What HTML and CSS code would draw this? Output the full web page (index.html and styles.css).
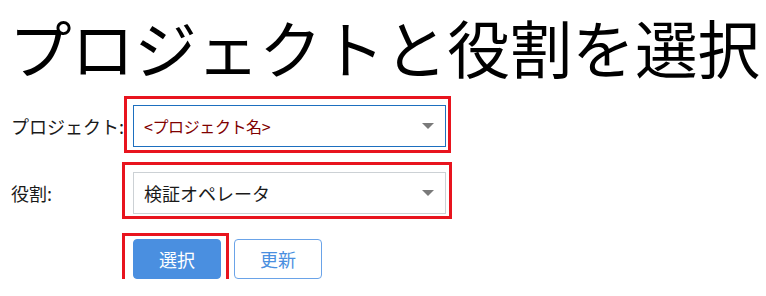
FILE: index.html
```html
<!DOCTYPE html>
<html lang="ja">
<head>
<meta charset="utf-8">
<title>プロジェクトと役割を選択</title>
<link rel="stylesheet" href="styles.css">
</head>
<body>
<div class="page">
  <h1 class="title">プロジェクトと役割を選択</h1>
  <div class="form">
    <label class="label">プロジェクト:</label>
    <div class="field mark mark-project">
      <div class="select select-focus">
        <span class="value value-placeholder">&lt;プロジェクト名&gt;</span>
        <span class="arrow"></span>
      </div>
    </div>
    <label class="label">役割:</label>
    <div class="field mark mark-role">
      <div class="select">
        <span class="value">検証オペレータ</span>
        <span class="arrow"></span>
      </div>
    </div>
    <div class="spacer"></div>
    <div class="buttons">
      <div class="mark mark-button">
        <button class="btn btn-primary">選択</button>
      </div>
      <button class="btn btn-outline">更新</button>
    </div>
  </div>
</div>
</body>
</html>
```

FILE: styles.css
```css
html, body {
  margin: 0;
  padding: 0;
  background: #ffffff;
}

body {
  font-family: "Noto Sans CJK JP", "Noto Sans", sans-serif;
  color: #1a1a1a;
}

.page {
  padding: 0 0 0 12px;
}

.title {
  margin: 0 0 0 -3px;
  height: 96px;
  font-size: 62.6px;
  line-height: 92px;
  font-weight: 400;
  color: #000;
  white-space: nowrap;
}

.form {
  display: grid;
  grid-template-columns: 121px 313px;
  row-gap: 25px;
  padding-top: 9px;
  align-items: center;
}

.label {
  font-size: 18px;
  color: #1a1a1a;
  margin-left: -1px;
}

.field {
  position: relative;
}

.select {
  height: 42px;
  box-sizing: border-box;
  border: 1px solid #ccd1d5;
  background: #fff;
  display: flex;
  align-items: center;
  justify-content: space-between;
  padding: 0 11px 0 10px;
}

.select-focus {
  border-color: #1d6fbf;
}

.value {
  font-size: 18px;
  color: #1a1a1a;
}

.value-placeholder {
  font-size: 16px;
  letter-spacing: -0.4px;
  color: #7f0000;
}

.arrow {
  width: 0;
  height: 0;
  border-left: 6px solid transparent;
  border-right: 6px solid transparent;
  border-top: 6px solid #7a7a7a;
}

.mark {
  position: relative;
}

.mark::after {
  content: "";
  position: absolute;
  border: 3px solid #e8141e;
  pointer-events: none;
}

.mark-project::after {
  top: -9px;
  left: -9px;
  right: -5px;
  bottom: -6px;
}

.mark-role::after {
  top: -10px;
  left: -11px;
  right: -6px;
  bottom: -5px;
}

.mark-button::after {
  top: -6px;
  left: -11px;
  right: -8px;
  bottom: -3px;
}

.buttons {
  display: flex;
  gap: 13px;
}

.btn {
  width: 88px;
  height: 40px;
  box-sizing: border-box;
  border-radius: 4px;
  font-family: "Noto Sans CJK JP", "Noto Sans", sans-serif;
  font-size: 18px;
  cursor: pointer;
  display: block;
  padding: 0;
}

.btn-primary {
  background: #4a8fe0;
  border: 1px solid #4a8fe0;
  color: #ffffff;
}

.btn-outline {
  background: #ffffff;
  border: 1px solid #6aa3e8;
  color: #4a8fe0;
}
```
